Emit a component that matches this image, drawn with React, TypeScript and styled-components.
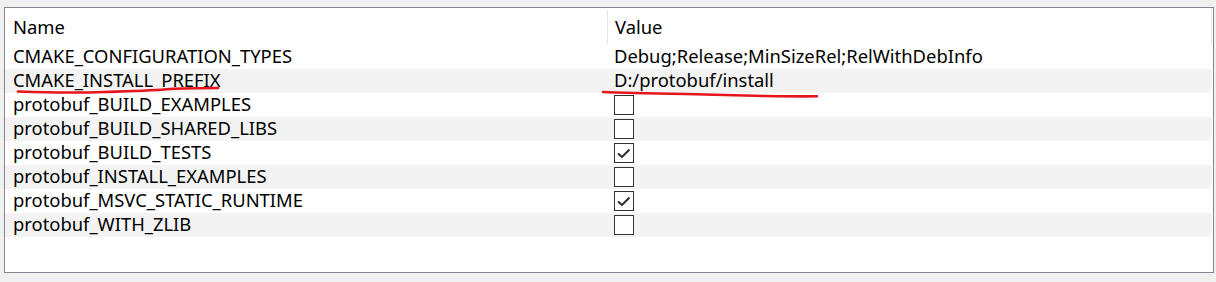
import React from 'react';
import styled, {createGlobalStyle} from 'styled-components';

type Entry = {name: string, value?: string, checked?: boolean};

const entries: Entry[] = [
    {name: 'CMAKE_CONFIGURATION_TYPES', value: 'Debug;Release;MinSizeRel;RelWithDebInfo'},
    {name: 'CMAKE_INSTALL_PREFIX', value: 'D:/protobuf/install'},
    {name: 'protobuf_BUILD_EXAMPLES', checked: false},
    {name: 'protobuf_BUILD_SHARED_LIBS', checked: false},
    {name: 'protobuf_BUILD_TESTS', checked: true},
    {name: 'protobuf_INSTALL_EXAMPLES', checked: false},
    {name: 'protobuf_MSVC_STATIC_RUNTIME', checked: true},
    {name: 'protobuf_WITH_ZLIB', checked: false},
];

const Global = createGlobalStyle`
    body {
        margin: 0;
        background: #f0f0f0;
        font-family: "Noto Sans", "Open Sans", sans-serif;
    }
`;

const Check = (props : {checked: boolean}) => (
    <Box>
        {props.checked &&
        <svg width='18' height='18' viewBox='0 0 18 18'>
            <path d='M3 9.5 L7 13 L14.5 5.5' fill='none' stroke='#2b2b2b' strokeWidth='2' />
        </svg>}
    </Box>
);

const Row = (props : {entry: Entry, odd: boolean}) => (
    <Line $odd={props.odd}>
        <NameCell>{props.entry.name}</NameCell>
        {props.entry.value !== undefined
            ? <ValueCell>{props.entry.value}</ValueCell>
            : <BoxCell><Check checked={!!props.entry.checked} /></BoxCell>}
    </Line>
);

export default function App() {
    return (
        <>
            <Global />
            <Frame>
                <Header>
                    <HeadCell>Name</HeadCell>
                    <Divider />
                    <HeadCell $value>Value</HeadCell>
                    <Scroll />
                </Header>
                {entries.map((e, i) => <Row key={e.name} entry={e} odd={i % 2 == 1} />)}
                <Marks width='1210' height='266' viewBox='0 0 1210 266'>
                    <path d='M13 83.5 C 40 84.5, 70 85, 100 84 C 130 83, 150 82.5, 165 81 C 180 80, 200 80, 213 80'
                        fill='none' stroke='#e8141b' strokeWidth='2.6' strokeLinecap='round' />
                    <path d='M598 84 C 620 85, 650 85.5, 680 86 C 710 86.5, 730 87.5, 760 88 C 780 88.3, 800 88.5, 812 88.3'
                        fill='none' stroke='#e8141b' strokeWidth='2.6' strokeLinecap='round' />
                </Marks>
            </Frame>
        </>
    );
}

const Frame = styled.div`
    position: relative;
    margin: 7px 0 0 4px;
    width: 1208px;
    height: 264px;
    border: 1px solid #828790;
    background-color: #ffffff;
    color: #000000;
    font-size: 18.4px;
`;

const Header = styled.div`
    position: relative;
    display: grid;
    grid-template-columns: 602px 1px 1fr;
    height: 37px;
    align-items: center;
`;

const HeadCell = styled.div<{$value?: boolean}>`
    padding-left: ${p => p.$value ? '7px' : '8px'};
`;

const Divider = styled.div`
    align-self: start;
    margin-top: 2px;
    height: 34px;
    background-color: #e3e3e3;
`;

const Scroll = styled.div`
    position: absolute;
    right: 1px;
    top: 1px;
    width: 1px;
    height: 36px;
    background-color: #e6e6e6;
`;

const Line = styled.div<{$odd: boolean}>`
    display: grid;
    grid-template-columns: 603px 1fr;
    height: 24px;
    align-items: center;
    margin-right: 1px;
    background-color: ${p => p.$odd ? '#f3f3f3' : '#ffffff'};
    line-height: 22px;
`;

const NameCell = styled.div`
    padding-left: 8px;
    padding-bottom: 2px;
    white-space: nowrap;
`;

const ValueCell = styled.div`
    padding-left: 6px;
    padding-bottom: 2px;
    white-space: nowrap;
`;

const BoxCell = styled.div`
    padding-left: 6px;
    display: flex;
    align-items: center;
`;

const Box = styled.div`
    width: 18px;
    height: 18px;
    border: 1px solid #333333;
    background: #ffffff;
    display: flex;
`;

const Marks = styled.svg`
    position: absolute;
    left: 0;
    top: 0;
    pointer-events: none;
`;
